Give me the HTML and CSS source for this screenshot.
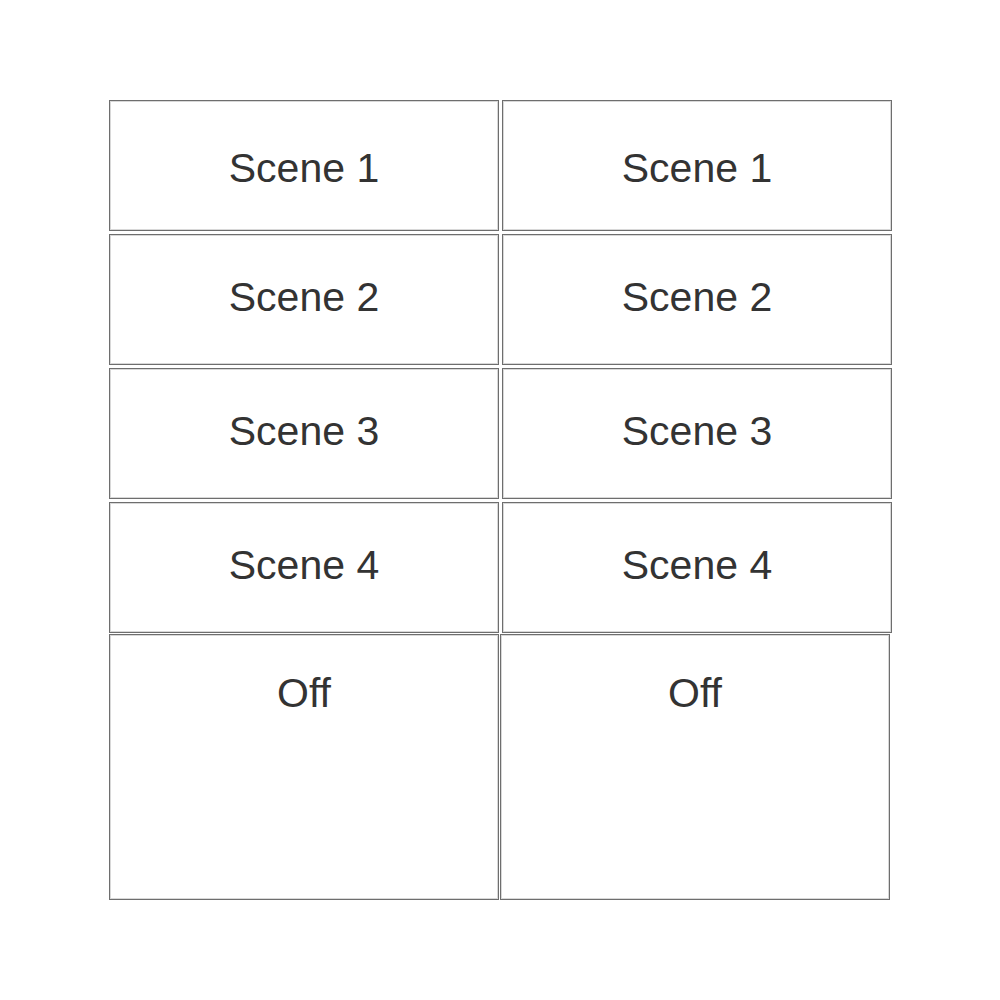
FILE: index.html
```html
<!DOCTYPE html>
<html>
<head>
<meta charset="utf-8">
<link rel="stylesheet" href="styles.css">
</head>
<body>
<div class="panel">
  <div class="cell first">Scene 1</div>
  <div class="cell first">Scene 1</div>
  <div class="cell">Scene 2</div>
  <div class="cell">Scene 2</div>
  <div class="cell">Scene 3</div>
  <div class="cell">Scene 3</div>
  <div class="cell">Scene 4</div>
  <div class="cell">Scene 4</div>
  <div class="cell off">Off</div>
  <div class="cell off off-right">Off</div>
</div>
</body>
</html>
```

FILE: styles.css
```css
html, body {
  margin: 0;
  padding: 0;
  background: #fff;
}
body {
  font-family: "Liberation Sans", Arial, sans-serif;
  color: #333;
}
.panel {
  display: grid;
  grid-template-columns: 390px 390px;
  grid-template-rows: 131px 131px 131px 131px 264px;
  column-gap: 3px;
  row-gap: 3px;
  padding: 100px 0 0 109px;
}
.cell {
  box-sizing: border-box;
  border: 1px solid #6e6e6e;
  box-shadow: inset 0 0 0 1px #d8d8d8;
  display: flex;
  align-items: center;
  justify-content: center;
  font-size: 41px;
  line-height: 46px;
  padding-bottom: 6px;
}
.first {
  padding-bottom: 0;
  padding-top: 4px;
}
.off {
  align-items: flex-start;
  padding-top: 35px;
  padding-bottom: 0;
  margin-top: -2px;
}
.off-right {
  margin-left: -2px;
  margin-right: 2px;
}
```
